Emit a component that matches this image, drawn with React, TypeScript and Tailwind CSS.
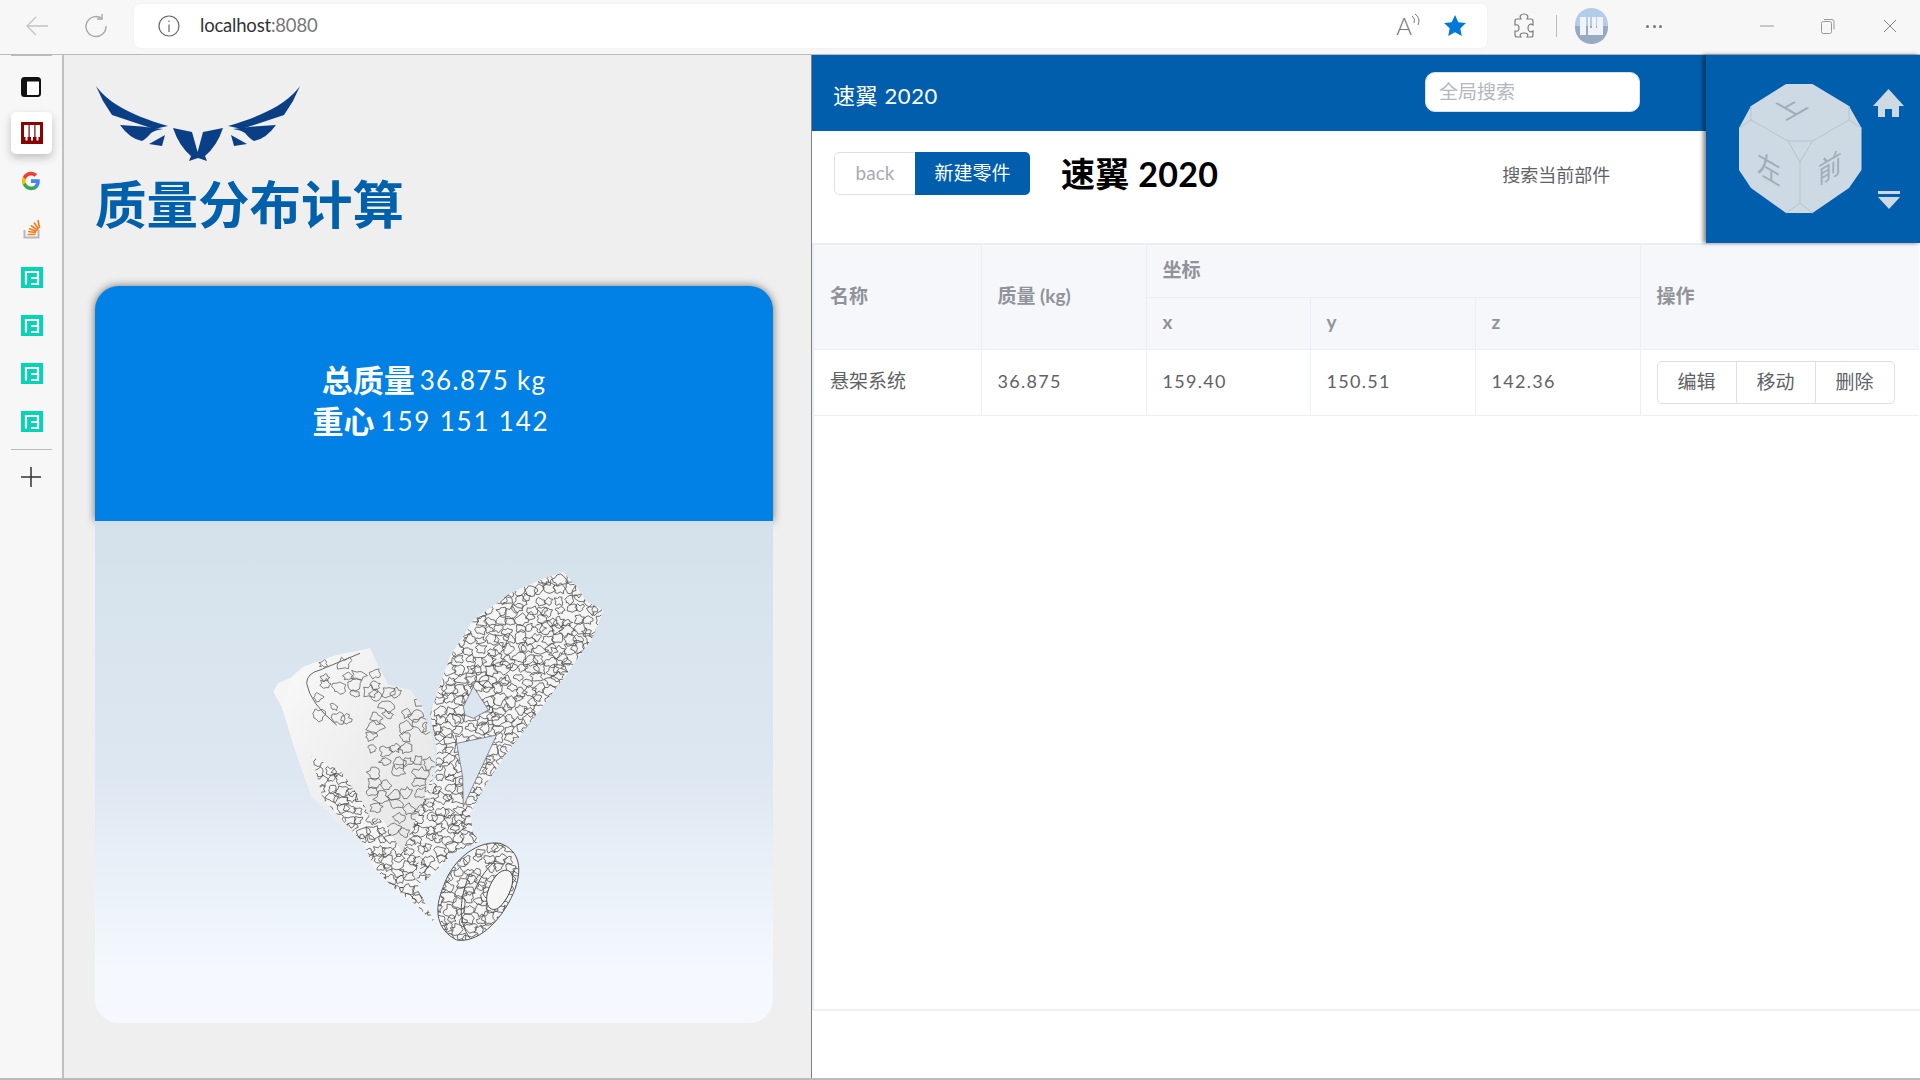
const ICON = '#7c7c7c';

const BrowserBar = () => (
  <div className="flex h-[54px] items-center bg-[#f7f7f7] pb-[2px]">
    <div className="flex w-[134px] shrink-0 items-center pl-[25px]">
      <svg width="24" height="24" viewBox="0 0 24 24" fill="none" stroke="#c4c4c4" strokeWidth="1.4">
        <path d="M23 12H2M11 3l-9 9 9 9" />
      </svg>
      <svg className="ml-[35px]" width="24" height="24" viewBox="0 0 24 24" fill="none" stroke="#a8a8a8" strokeWidth="1.4">
        <path d="M18 4.500A10 10 0 1 0 22 12" />
        <path d="M18 0v5h-5" />
      </svg>
    </div>
    <div className="flex h-11 w-[1353px] shrink-0 items-center rounded-md bg-white pl-[24px] pr-[20px] shadow-[0_0_3px_rgba(0,0,0,0.05)]">
      <svg width="22" height="22" viewBox="0 0 22 22" fill="none" stroke="#666" strokeWidth="1.2">
        <circle cx="11" cy="11" r="10" />
        <path d="M11 9.500V17M11 5.500v1.600" />
      </svg>
      <span className="ml-[20px] text-[18.500px] tracking-[-0.2px] text-[#333]">
        localhost<span className="text-[#777]">:8080</span>
      </span>
      <span className="ml-auto text-[24px] font-light leading-none text-[#777]">
        A
      </span>
      <svg className="-ml-px -mt-3" width="10" height="13" viewBox="0 0 10 13" fill="none" stroke="#777">
        <path d="M1 2q4 3 2 7M4 0q6 4 3 11" />
      </svg>
      <svg className="ml-[22px]" width="24" height="24" viewBox="0 0 24 24" fill="#0078d7">
        <path d="M12 1l3.300 7.200 7.700.9-5.700 5.300 1.500 7.700L12 18.200 5.200 22l1.500-7.700L1 9.100l7.700-.9z" />
      </svg>
    </div>
    <svg className="ml-[26px]" width="22" height="26" viewBox="0 0 22 26" fill="none" stroke={ICON} strokeWidth="1.2">
      <path d="M8 6c-2-3 0-5 3-5s5 2 3 5h4q2 0 2 2v4c-3-2-5 0-5 3s2 5 5 3v4q0 2-2 2h-4c2-3 0-4-3-4s-5 1-3 4H4q-2 0-2-2v-4c3 1 4-1 4-3s-1-4-4-3V8q0-2 2-2z" />
    </svg>
    <div className="ml-[21px] h-[22px] w-px bg-[#bbb]" />
    <div className="ml-[18px] flex h-[36px] w-[33px] flex-col items-center justify-center rounded-full bg-[linear-gradient(#b3cde8_0%,#b3cde8_50%,#98aac2_50%)]">
      <svg width="23" height="18" viewBox="0 0 23 18" fill="#f0f4f8">
        <path d="M0 0h6v18H0zM8 0h2v11h2V0h4v11h1V0h6v18H8z" />
      </svg>
    </div>
    <div className="ml-[38px] flex gap-[3.500px]">
      <span className="size-[3px] rounded-full bg-[#777]" />
      <span className="size-[3px] rounded-full bg-[#777]" />
      <span className="size-[3px] rounded-full bg-[#777]" />
    </div>
    <svg className="ml-[98px]" width="14" height="14" viewBox="0 0 14 14" stroke="#999">
      <path d="M0 7h14" />
    </svg>
    <svg className="ml-[47px]" width="14" height="16" viewBox="0 0 14 16" fill="none" stroke="#999">
      <rect x="0.500" y="3.500" width="10" height="12" rx="2" />
      <path d="M3 1.500h8a2 2 0 0 1 2 2v8" />
    </svg>
    <svg className="ml-[48px]" width="14" height="14" viewBox="0 0 14 14" stroke="#888">
      <path d="M1 1l12 12M13 1L1 13" />
    </svg>
  </div>
);

const TealIcon = () => (
  <svg width="22" height="21" viewBox="0 0 22 21">
    <rect width="22" height="21" fill="#05d5b4" />
    <path d="M5 17.500V5h12v12h-7M10 11h7" fill="none" stroke="#fff" strokeWidth="2.200" />
  </svg>
);

const SideBar = () => (
  <div className="flex w-[64px] shrink-0 flex-col border-r-2 border-[#c0c0c0] bg-[#f7f7f7]">
    <div className="ml-[11px] h-px w-[41px] bg-[#bbb]" />
    <div className="h-[56px] pl-[21px] pt-[21px]">
      <svg width="20" height="20" viewBox="0 0 20 20">
        <rect x="1" y="1" width="18" height="18" rx="2.500" fill="#fff" stroke="#111" strokeWidth="2" />
        <rect x="1" y="1" width="5" height="18" fill="#111" />
        <rect x="1" y="1" width="18" height="3.500" fill="#111" />
      </svg>
    </div>
    <div className="ml-[11px] flex h-[42px] w-[41px] items-center justify-center rounded-[5px] bg-white shadow-[0_4px_8px_rgba(0,0,0,0.22)]">
      <svg width="22" height="22" viewBox="0 0 22 22">
        <rect width="22" height="22" fill="#8a0303" />
        <path d="M3 3h4.500v12H3zM8.700 3h4.600v12H8.700zM14.500 3H19v12h-4.500zM4.500 15h2v3.500h-2zM10 15h2v3.500h-2zM15.500 15h2v3.500h-2z" fill="#fff" />
      </svg>
    </div>
    <div className="mt-[14px] flex h-[26px] items-center pl-[21px]">
      <svg width="20" height="20" viewBox="0 0 24 24">
        <path fill="#4285F4" d="M22.560 12.250c0-.780-.070-1.530-.200-2.250H12v4.260h5.920c-.260 1.370-1.040 2.530-2.210 3.310v2.770h3.570c2.080-1.920 3.280-4.740 3.280-8.090z" />
        <path fill="#34A853" d="M12 23c2.970 0 5.460-.980 7.280-2.660l-3.570-2.770c-.980.660-2.230 1.060-3.710 1.060-2.860 0-5.290-1.930-6.160-4.530H2.180v2.840C3.990 20.530 7.700 23 12 23z" />
        <path fill="#FBBC05" d="M5.840 14.090c-.220-.660-.350-1.360-.350-2.090s.130-1.430.350-2.090V7.070H2.180C1.430 8.550 1 10.220 1 12s.430 3.450 1.180 4.930l3.660-2.840z" />
        <path fill="#EA4335" d="M12 5.380c1.620 0 3.060.560 4.210 1.640l3.150-3.150C17.450 2.090 14.970 1 12 1 7.700 1 3.990 3.470 2.180 7.070l3.660 2.840c.870-2.600 3.300-4.530 6.160-4.530z" />
      </svg>
    </div>
    <div className="mt-[24px] flex h-[22px] items-center pl-[22px]">
      <svg width="20" height="20" viewBox="0 0 20 20" fill="none">
        <path d="M2.500 11v7.500h14V11" stroke="#b8b8b8" strokeWidth="2" />
        <path d="M5.500 15.500h8M6 12.500l8 1.200M7 9.500l7.500 3M9 6.500l6.500 5M12 3.500l4.500 7M16 1l1.500 8" stroke="#f48024" strokeWidth="1.700" />
      </svg>
    </div>
    <div className="mt-[27px] flex flex-col gap-[27px] pl-[21px]">
      <TealIcon />
      <TealIcon />
      <TealIcon />
      <TealIcon />
    </div>
    <div className="ml-[11px] mt-[17px] h-px w-[41px] bg-[#bbb]" />
    <div className="mt-[17px] flex pl-[21px]">
      <svg width="20" height="20" viewBox="0 0 20 20" stroke="#333" strokeWidth="1.500">
        <path d="M10 0v20M0 10h20" />
      </svg>
    </div>
  </div>
);

const Logo = () => (
  <svg width="208" height="76" viewBox="0 0 208 76" fill="#0a3f86">
    <path d="M1 0c10 14 30 28 72 40L59 43 17 29 8 15z" />
    <path d="M25 39q22 1 43 4-8 1-12 4-5 6-9 8-12-2-22-16z" />
    <path d="M70 49l-16 9 13 2z" />
    <path d="M78 42l19 4 5.600 20L108 46l20-4q-6 18-18 28l2 5-9-3-9 3 2-5Q84 60 78 42z" />
    <path d="M205 0c-10 14-30 28-72 40l14 3 42-14 9-14z" />
    <path d="M181 39q-22 1-43 4 8 1 12 4 5 6 9 8 12-2 22-16z" />
    <path d="M136 49l16 9-13 2z" />
  </svg>
);

const BLOCK = 'M100 425L115 400 150 385 190 350 290 315 390 295 415 350 445 405 510 420 545 465 575 560 585 640 565 770 550 890 530 960 500 1000 470 960 400 890 340 860 270 790 215 740 165 600 125 470Z';
const LOWER = 'M270 770L350 790 430 810 470 880 520 970 560 1070 590 1125 520 1060 450 1005 400 950 370 880Z';
const ARM = 'M570 490L630 320 700 210 810 130 900 90 970 65 1010 110 1040 155 1090 180 1060 260 960 400 870 520 800 610 740 700 690 790 700 850 720 875 640 910 560 990 520 1010 540 960 560 800 585 680 590 600Z';
const HOLE = 'M670 470L700 410 745 480 700 505 675 495ZM650 580L770 555 670 770 668 680Z';
const RING = 'M610 1010C640 920 720 870 780 880 840 900 850 960 820 1030 780 1120 710 1180 650 1170 590 1140 580 1080 610 1010Z';
const RING_HOLE = 'M745 1020C760 975 790 950 810 965 830 985 810 1040 780 1070 750 1095 730 1060 745 1020Z';

// seeded so the contour cells stay the same on every load
const cellPaths = (x0: number, y0: number, x1: number, y1: number, step: number, keep: number, seed: number) => {
  let s = seed;
  const rnd = () => {
    s = (s * 16807) % 2147483647;
    return s / 2147483647;
  };
  let d = '';
  for (let gy = y0; gy < y1; gy += step) {
    for (let gx = x0; gx < x1; gx += step) {
      const cx = gx + rnd() * step * 0.6;
      const cy = gy + rnd() * step * 0.6;
      const base = step * (0.38 + rnd() * 0.3);
      const show = rnd() < keep;
      const pts: [number, number][] = [];
      for (let i = 0; i < 13; i++) {
        const a = (i / 13) * Math.PI * 2;
        const r = base * (0.6 + rnd() * 0.8);
        pts.push([cx + Math.cos(a) * r, cy + Math.sin(a) * r * 0.85]);
      }
      if (!show) continue;
      d += `M${pts[0][0].toFixed(1)} ${pts[0][1].toFixed(1)}`;
      for (let i = 1; i <= 13; i++) {
        const p = pts[i % 13];
        d += `L${p[0].toFixed(1)} ${p[1].toFixed(1)}`;
      }
    }
  }
  return d;
};

const denseCells = cellPaths(200, 50, 1100, 1200, 30, 1, 4711);
const midCells = cellPaths(390, 420, 600, 830, 34, 0.62, 2207);
const sparseCells = cellPaths(220, 340, 420, 520, 30, 0.42, 913);

const PartModel = () => (
  <svg className="absolute left-[145px] top-[29px]" width="400" height="400" viewBox="0 0 1200 1200">
    <defs>
      <clipPath id="partAll">
        <path d={BLOCK} />
        <path d={LOWER} />
        <path clipRule="evenodd" d={ARM + HOLE} />
        <path d={RING} />
      </clipPath>
      <clipPath id="partDense">
        <path d="M100 425L115 400 150 385 140 445 125 470ZM215 620L300 660 370 760 390 800 300 800 250 750Z" />
        <path d="M540 780L590 640 600 900 540 1000 480 920Z" />
        <path d={LOWER} />
        <path clipRule="evenodd" d={ARM + HOLE} />
        <path d={RING} />
      </clipPath>
      <linearGradient id="blockShade" x1="0" y1="0" x2="1" y2="1">
        <stop offset="0" stopColor="#fafafa" />
        <stop offset="0.5" stopColor="#eeeeee" />
        <stop offset="1" stopColor="#e4e4e4" />
      </linearGradient>
    </defs>
    <g clipPath="url(#partAll)">
      <rect width="1200" height="1200" fill="#f6f6f6" />
      <path d={BLOCK} fill="url(#blockShade)" />
      <path d={midCells} fill="none" stroke="#555" strokeWidth="2.200" />
      <path d={sparseCells} fill="none" stroke="#555" strokeWidth="2.200" />
      <g clipPath="url(#partDense)">
        <rect width="1200" height="1200" fill="#f5f5f5" />
        <path d={denseCells} fill="none" stroke="#4a4a4a" strokeWidth="2.400" />
      </g>
    </g>
    <path d="M200 400q10 60 90 125M200 400q0-30 40-40l120-50" fill="none" stroke="#666" strokeWidth="3" />
    <path d={RING_HOLE} fill="#f6f6f6" stroke="#444" strokeWidth="3" />
    <path d={RING} fill="none" stroke="#555" strokeWidth="3" />
    <path d="M690 970C660 1040 650 1110 690 1165M700 1030C720 980 745 950 770 930" fill="none" stroke="#555" strokeWidth="3" />
    <path d={HOLE} fill="none" stroke="#555" strokeWidth="2" />
  </svg>
);

const LeftPanel = () => (
  <div className="w-[747px] shrink-0 bg-[#efefef] pl-[31px] pt-[31px]">
    <Logo />
    <h1 className="mt-[9px] text-[51.500px] font-bold leading-[66px] text-[#0060ac]">质量分布计算</h1>
    <div className="mt-[49px] w-[678px]">
      <div className="flex h-[235px] flex-col items-center justify-center rounded-t-[24px] bg-[#0180e6] pb-[5px] text-white shadow-[0_0_8px_rgba(0,0,0,0.55)]">
        <p className="flex h-[41px] items-center text-[26px] tracking-[1.300px]">
          <b className="mr-[5px] text-[31px] tracking-normal">总质量</b>36.875 kg
        </p>
        <p className="flex h-[41px] items-center pr-[6px] text-[26px] tracking-[1.800px]">
          <b className="mr-[6px] text-[31px] tracking-normal">重心</b>159 151 142
        </p>
      </div>
      <div className="relative h-[502px] rounded-b-[24px] bg-[linear-gradient(#d4e1eb,#dde7f1_50%,#f5f9ff_90%)]">
        <PartModel />
      </div>
    </div>
  </div>
);

const ViewCube = () => (
  <div className="relative z-10 flex w-[214px] shrink-0 items-center justify-between bg-[#005ead] pl-[33px] pr-[16px] shadow-[-3px_0_4px_rgba(0,0,0,0.45)]">
    <svg width="123" height="130" viewBox="0 0 123 130">
      <path d="M47 0h26.500L110 22l12.500 22v42L110 104l-36.500 25H47L12 104 0 86V44l12-22z" fill="#cdd9e3" />
      <path d="M49 57h24.500L61 78zM49 57L12 36 0 44M12 36V22M73.500 57L110 36l12.500 8M110 36V22M61 78v41M47 129l14-10 12.500 10" fill="none" stroke="#b7c4d0" strokeWidth="1" />
      <text transform="matrix(0.87 -0.5 0.87 0.5 46 37)" fontSize="28" fill="#a0adb9" fontFamily="Noto Sans CJK SC">上</text>
      <text transform="matrix(0.85 0.5 0 1 18 88)" fontSize="28" fill="#a0adb9" fontFamily="Noto Sans CJK SC">左</text>
      <text transform="matrix(0.85 -0.5 0 1 79 101)" fontSize="28" fill="#a0adb9" fontFamily="Noto Sans CJK SC">前</text>
    </svg>
    <div className="flex h-[120px] flex-col items-center justify-between">
      <svg width="31" height="28" viewBox="0 0 31 28" fill="#cdd9e3">
        <path d="M15.500 0L31 17h-5v11h-7V20h-7v8H5V17H0z" />
      </svg>
      <svg width="22" height="18" viewBox="0 0 22 18" fill="#cdd9e3">
        <path d="M0 0h22v3H0zM0 6h22L11 18z" />
      </svg>
    </div>
  </div>
);

const headCell = 'border-b border-r border-[#ebeef5] bg-[#f5f7fa] px-[16px] pb-[2px] text-left text-[19px] font-bold text-[#909399]';
const bodyCell = 'border-b border-r border-[#ebeef5] px-[16px] pb-[2px] text-[18px] tracking-[1.300px] text-[#606266]';

const actions = ['编辑', '移动', '删除'];

const PartsTable = () => (
  <table className="w-[1105px] table-fixed border-collapse">
    <colgroup>
      <col className="w-[167px]" />
      <col className="w-[165px]" />
      <col className="w-[164px]" />
      <col className="w-[165px]" />
      <col className="w-[165px]" />
      <col />
    </colgroup>
    <thead>
      <tr className="h-[52px]">
        <th rowSpan={2} className={headCell}>名称</th>
        <th rowSpan={2} className={headCell}>质量 (kg)</th>
        <th colSpan={3} className={headCell}>坐标</th>
        <th rowSpan={2} className={headCell + ' border-r-0'}>操作</th>
      </tr>
      <tr className="h-[52px]">
        <th className={headCell}>x</th>
        <th className={headCell}>y</th>
        <th className={headCell}>z</th>
      </tr>
    </thead>
    <tbody>
      <tr className="h-[66px]">
        <td className={bodyCell + ' text-[19px] tracking-normal'}>悬架系统</td>
        <td className={bodyCell}>36.875</td>
        <td className={bodyCell}>159.40</td>
        <td className={bodyCell}>150.51</td>
        <td className={bodyCell}>142.36</td>
        <td className="border-b border-[#ebeef5] px-[16px]">
          <div className="flex h-[43px] w-[238px] divide-x divide-[#dcdfe6] rounded-[5px] border border-[#dcdfe6]">
            {actions.map((a) => (
              <button key={a} className="flex-1 text-[19px] text-[#606266]">{a}</button>
            ))}
          </div>
        </td>
      </tr>
    </tbody>
  </table>
);

const RightPanel = () => (
  <div className="flex min-w-0 flex-1 flex-col border-l border-[#808080] bg-white">
    <div className="flex h-[190px] border-b-2 border-[#ebeef5]">
      <div className="flex min-w-0 flex-1 flex-col">
        <div className="flex h-[76px] items-center justify-between bg-[#005ead] pl-[21px] pr-[66px]">
          <span className="mt-[4px] text-[22px] tracking-[0.6px] text-white">速翼 2020</span>
          <div className="mb-[2px] flex h-[40px] w-[215px] items-center rounded-[10px] border border-[#dcdfe6] bg-white pl-[13px] text-[19px] text-[#b4b7be]">全局搜索</div>
        </div>
        <div className="flex items-start pl-[22px] pt-[21px]">
          <div className="flex h-[43px] w-[196px] overflow-hidden rounded-[5px]">
            <span className="flex w-[81px] items-center justify-center rounded-l-[5px] border border-r-0 border-[#dcdfe6] text-[19px] text-[#a8abb2]">back</span>
            <span className="flex flex-1 items-center justify-center bg-[#005ead] text-[19px] text-white">新建零件</span>
          </div>
          <h2 className="ml-[31px] text-[34px] font-bold leading-[44px] tracking-[0.3px] text-black">速翼 2020</h2>
          <span className="ml-[284px] mt-[10px] text-[18px] text-[#606266]">搜索当前部件</span>
        </div>
      </div>
      <ViewCube />
    </div>
    <div className="h-[766px] border-b-2 border-l-2 border-[#ebeef5]">
      <PartsTable />
    </div>
  </div>
);

export default function App() {
  return (
    <div className="flex h-[1080px] w-[1920px] flex-col overflow-hidden bg-white font-['Lato','Noto_Sans_CJK_SC',sans-serif]">
      <BrowserBar />
      <div className="flex min-h-0 flex-1 border-b-2 border-t border-[#bbb]">
        <SideBar />
        <LeftPanel />
        <RightPanel />
      </div>
    </div>
  );
}
